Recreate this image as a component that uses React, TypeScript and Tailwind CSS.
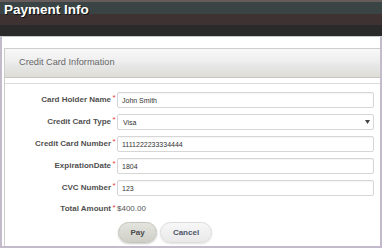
import React from "react";

const fields = [
  { label: "Card Holder Name", value: "John Smith" },
  { label: "Credit Card Type", value: "Visa", select: true },
  { label: "Credit Card Number", value: "1111222233334444" },
  { label: "ExpirationDate", value: "1804" },
  { label: "CVC Number", value: "123" },
];

const Label = ({ text }: { text: string }) => (
  <>
    <span className="w-[106px] text-right font-bold text-[8px] text-[#505050] leading-[16px]">
      {text}
    </span>
    <span className="w-[6px] text-center text-[8px] text-[#e03a3a] leading-[12px] self-start">
      *
    </span>
  </>
);

const App = () => {
  return (
    <div className="w-[382px] h-[248px] bg-white flex flex-col overflow-hidden font-['Liberation_Sans',Arial,sans-serif]">
      {/* header */}
      <div className="h-[37px] shrink-0 border-b border-[#c9c9c9] bg-[linear-gradient(to_bottom,#665c5c_0px,#665c5c_2px,#3a4444_2px,#3a4444_14px,#3e3233_14px,#3e3233_25px,#2a2a2a_25px)]">
        <div className="pl-[4px] pt-[2px] text-[13.5px] leading-[16px] font-bold text-white [text-shadow:1px_1px_0_#111]">
          Payment Info
        </div>
      </div>
      {/* body frame */}
      <div className="flex-1 border-x-2 border-b-2 border-[#c3bbcb] pl-[2px] pt-[11px]">
        <div className="h-full border-l border-t border-[#cdcdcd]">
          <div className="h-[29px] flex items-center pl-[14px] border-b border-[#c6c6be] bg-[linear-gradient(to_bottom,#f8f8f8,#eeeeee_45%,#e6e6e6_60%,#dedeD6)]">
            <span className="text-[9.2px] text-[#666]">Credit Card Information</span>
          </div>
          <div className="mt-[5px] border-t border-[#dcdcdc] pt-[8px] pr-[6px] flex flex-col gap-[6px]">
            {fields.map((f) => (
              <div key={f.label} className="flex items-center h-[16px]">
                <Label text={f.label} />
                {f.select ? (
                  <div className="relative flex-1 h-[16px] text-[7px] leading-none">
                    <select
                      defaultValue={f.value}
                      className="block appearance-none w-full h-[16px] border border-[#d6d6d6] rounded-[2px] bg-white pl-[5px] py-0 text-[7px] leading-none text-[#333] outline-none"
                    >
                      <option>Visa</option>
                      <option>MasterCard</option>
                    </select>
                    <svg
                      className="absolute right-[4px] top-[6px]"
                      width="5"
                      height="4"
                      viewBox="0 0 5 4"
                    >
                      <path d="M0 0h5L2.5 4z" fill="#444" />
                    </svg>
                  </div>
                ) : (
                  <input
                    type="text"
                    defaultValue={f.value}
                    className="flex-1 h-[16px] border border-[#d6d6d6] rounded-[2px] bg-white pl-[4px] text-[7px] text-[#333] outline-none shadow-[inset_0_1px_1px_rgba(0,0,0,0.04)]"
                  />
                )}
              </div>
            ))}
            {/* total */}
            <div className="flex items-center h-[14px]">
              <Label text="Total Amount" />
              <span className="text-[8px] text-[#555] leading-[16px]">$400.00</span>
            </div>
            {/* buttons */}
            <div className="flex gap-[3px] pl-[113px]">
              <button className="w-[39px] h-[21px] rounded-full border border-[#c4c4bc] bg-[linear-gradient(to_bottom,#e4e4de,#cfcfc8)] shadow-[0_1px_2px_rgba(0,0,0,0.2)] text-[8px] font-bold text-[#4a4a4a]">
                Pay
              </button>
              <button className="w-[52px] h-[21px] rounded-full border border-[#dcdcdc] bg-[linear-gradient(to_bottom,#f7f7f7,#e9e9e9)] shadow-[0_1px_2px_rgba(0,0,0,0.12)] text-[8px] font-bold text-[#4c5468]">
                Cancel
              </button>
            </div>
          </div>
        </div>
      </div>
    </div>
  );
};

export default App;
